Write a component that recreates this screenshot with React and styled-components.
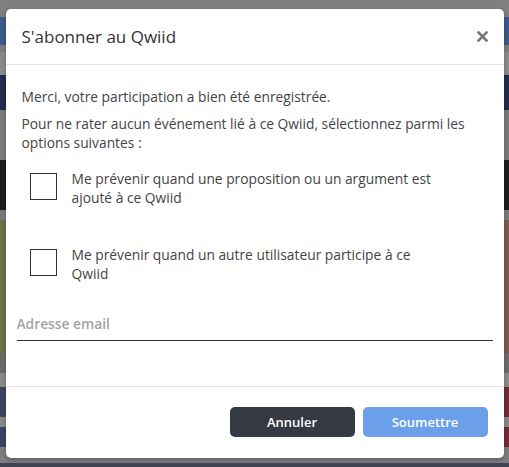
import React from "react";
import styled, { createGlobalStyle } from "styled-components";

const GlobalStyle = createGlobalStyle`
  html, body {
    margin: 0;
    padding: 0;
    width: 509px;
    height: 467px;
    overflow: hidden;
  }
  body {
    font-family: "Open Sans", "Liberation Sans", sans-serif;
  }
`;

const Page = styled.div`
  position: relative;
  width: 509px;
  height: 467px;
  display: flex;
  flex-direction: column;
  background: #7f7f7f;
`;

const Band = styled.div`
  height: ${(p) => p.$h}px;
  flex-shrink: 0;
  background: linear-gradient(
    to right,
    ${(p) => p.$l} 0 50%,
    ${(p) => p.$r || p.$l} 50% 100%
  );
`;

const Overlay = styled.div`
  position: absolute;
  inset: 0;
  display: flex;
  justify-content: center;
  padding-top: 9px;
`;

const Dialog = styled.div`
  width: 498px;
  height: 449px;
  background: #fff;
  border-radius: 5px;
  display: flex;
  flex-direction: column;
  box-shadow: 0 2px 4px rgba(0, 0, 0, 0.25);
`;

const Header = styled.div`
  height: 55px;
  flex-shrink: 0;
  border-bottom: 1px solid #e2e2e2;
  display: flex;
  align-items: center;
  justify-content: space-between;
  padding: 0 14px 0 16px;
`;

const Title = styled.h2`
  margin: 0;
  font-size: 17px;
  font-weight: 400;
  color: #333;
`;

const Close = styled.button`
  border: 0;
  background: none;
  padding: 0;
  width: 14px;
  height: 14px;
  display: flex;
  align-items: center;
  justify-content: center;
  cursor: pointer;
`;

const Body = styled.div`
  flex: 1;
  padding: 22px 11px 0 16px;
  color: #444;
  font-size: 13.8px;
  line-height: 19px;
`;

const Para = styled.p`
  margin: 0 0 8px;
  padding-right: 10px;
`;

const Option = styled.label`
  display: flex;
  align-items: flex-start;
  gap: 15px;
  margin: ${(p) => p.$top}px 0 0 8px;
`;

const Box = styled.span`
  width: 27px;
  height: 27px;
  flex-shrink: 0;
  border: 1px solid #333;
  box-sizing: border-box;
`;

const OptionText = styled.span`
  max-width: 370px;
  margin-top: -4.5px;
`;

const Email = styled.input`
  display: block;
  width: 476px;
  height: 27px;
  box-sizing: border-box;
  margin: 31px 0 0 -5px;
  padding: 0 0 7px;
  border: 0;
  border-bottom: 1px solid #333;
  font-family: inherit;
  font-size: 13.8px;
  line-height: 19px;
  outline: none;
  &::placeholder {
    color: #a3a3a3;
    font-weight: 600;
  }
`;

const Footer = styled.div`
  height: 72px;
  flex-shrink: 0;
  border-top: 1px solid #e2e2e2;
  display: flex;
  align-items: flex-start;
  justify-content: flex-end;
  gap: 8px;
  padding: 20px 16px 0 0;
  box-sizing: border-box;
`;

const Button = styled.button`
  width: 125px;
  height: 30px;
  border: 0;
  border-radius: 5px;
  background: ${(p) => (p.$primary ? "#6c9fe9" : "#353a42")};
  color: #fff;
  font-family: inherit;
  font-size: 13px;
  font-weight: 600;
  cursor: pointer;
`;

const bands = [
  [17, "#7f7f7f"],
  [28, "#3c5a8b"],
  [7, "#7d7d7d"],
  [23, "#8a8a8a"],
  [35, "#212c4c", "#212c4c"],
  [50, "#7a7a7a"],
  [50, "#1c1c1c"],
  [10, "#7a7a7a"],
  [133, "#67744a", "#7c5b52"],
  [20, "#6c6c6c"],
  [14, "#8a8a8a"],
  [30, "#3c4561", "#6d2c35"],
  [10, "#888888"],
  [20, "#3c4561", "#6d2c35"],
  [11, "#7d7d7d"],
  [5, "#7d7d7d"],
  [4, "#3f4555"],
];

export default function App() {
  return (
    <>
      <GlobalStyle />
      <Page>
        {bands.map(([h, l, r], i) => (
          <Band key={i} $h={h} $l={l} $r={r} />
        ))}
        <Overlay>
          <Dialog>
            <Header>
              <Title>S'abonner au Qwiid</Title>
              <Close aria-label="Fermer">
                <svg width="11" height="11" viewBox="0 0 11 11">
                  <path
                    d="M1.5 1.5 L9.5 9.5 M9.5 1.5 L1.5 9.5"
                    stroke="#777"
                    strokeWidth="2.6"
                    strokeLinecap="square"
                  />
                </svg>
              </Close>
            </Header>
            <Body>
              <Para>Merci, votre participation a bien été enregistrée.</Para>
              <Para>
                Pour ne rater aucun événement lié à ce Qwiid, sélectionnez parmi
                les options suivantes :
              </Para>
              <Option $top={21}>
                <Box />
                <OptionText>
                  Me prévenir quand une proposition ou un argument est ajouté à
                  ce Qwiid
                </OptionText>
              </Option>
              <Option $top={42.5}>
                <Box />
                <OptionText>
                  Me prévenir quand un autre utilisateur participe à ce Qwiid
                </OptionText>
              </Option>
              <Email placeholder="Adresse email" />
            </Body>
            <Footer>
              <Button>Annuler</Button>
              <Button $primary>Soumettre</Button>
            </Footer>
          </Dialog>
        </Overlay>
      </Page>
    </>
  );
}
